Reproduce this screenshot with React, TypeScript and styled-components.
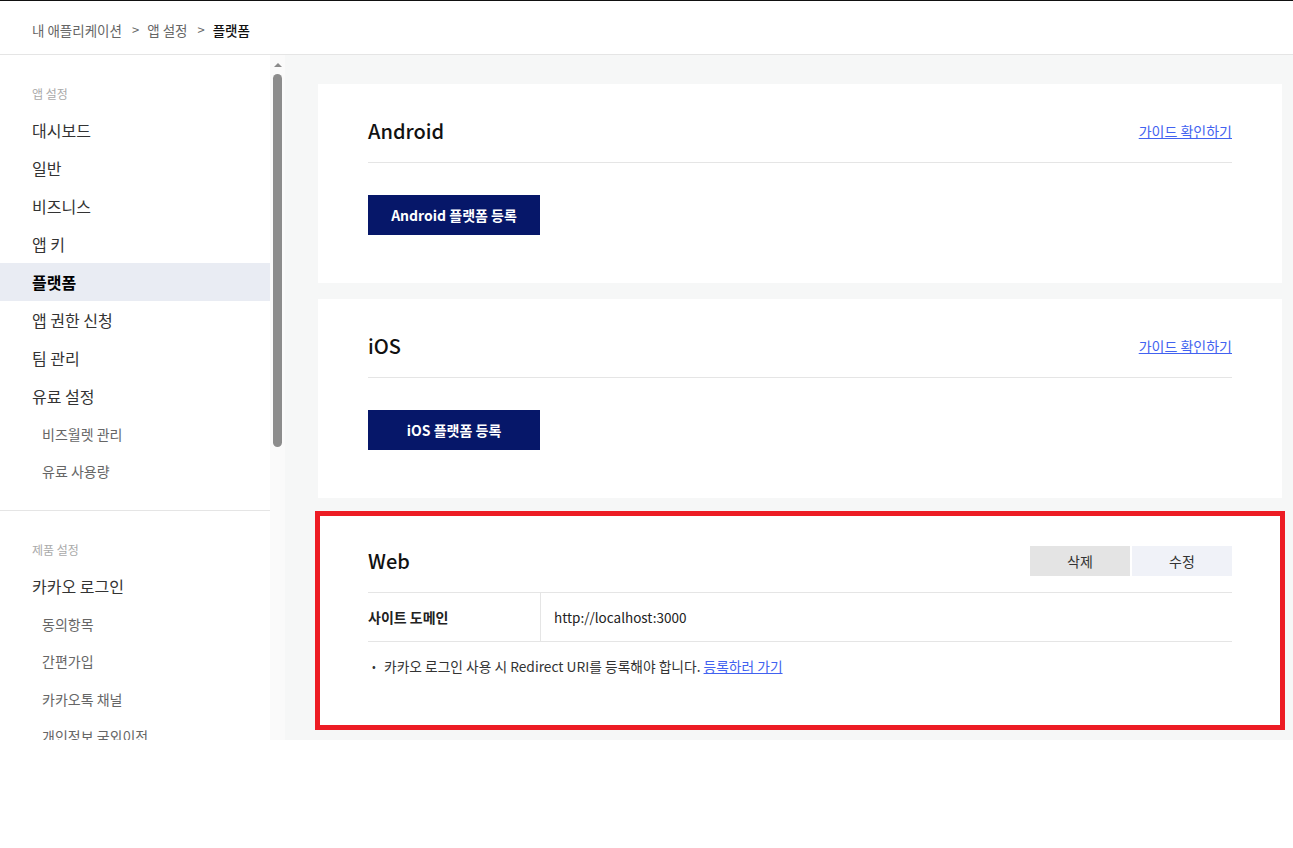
import styled, { createGlobalStyle } from "styled-components";

const GlobalStyle = createGlobalStyle`
  html, body {
    margin: 0;
    padding: 0;
    background: #ffffff;
  }
  body {
    font-family: "Noto Sans CJK KR", "Noto Sans", sans-serif;
    color: #222;
  }
  * {
    box-sizing: border-box;
  }
`;

const Page = styled.div`
  height: 740px;
  display: flex;
  flex-direction: column;
  border-top: 1px solid #111;
`;

const Header = styled.header`
  height: 54px;
  flex-shrink: 0;
  display: flex;
  align-items: flex-start;
  padding: 19px 32px 0;
  border-bottom: 1px solid #e5e5e5;
`;

const Crumb = styled.span<{ $current?: boolean }>`
  font-size: 13.5px;
  line-height: 20px;
  color: ${(p) => (p.$current ? "#111" : "#666")};
  font-weight: ${(p) => (p.$current ? 500 : 400)};
`;

const CrumbSep = styled.span`
  font-size: 13px;
  line-height: 20px;
  color: #666;
  margin: 0 8px 0 10px;
`;

const Body = styled.div`
  flex: 1;
  display: flex;
  min-height: 0;
`;

const SidebarWrap = styled.div`
  width: 285px;
  flex-shrink: 0;
  display: flex;
  background: #fff;
`;

const SidebarList = styled.nav`
  width: 270px;
  overflow: hidden;
`;

// drawn scrollbar: arrow on top, rounded thumb
const ScrollTrack = styled.div`
  width: 15px;
  display: flex;
  flex-direction: column;
  align-items: center;
  background: #fafafa;
  padding-top: 8px;
  gap: 7px;
`;

const ScrollArrow = styled.div`
  width: 0;
  height: 0;
  border-left: 4px solid transparent;
  border-right: 4px solid transparent;
  border-bottom: 4px solid #8a8a8a;
`;

const ScrollThumb = styled.div`
  width: 9px;
  height: 373px;
  border-radius: 5px;
  background: #8c8c8c;
`;

const NavGroup = styled.div<{ $divider?: boolean }>`
  padding: 29px 0 20px;
  border-bottom: ${(p) => (p.$divider ? "1px solid #e5e5e5" : "none")};
`;

const GroupLabel = styled.div`
  padding: 0 32px;
  font-size: 12px;
  line-height: 20px;
  color: #aaa;
  margin-bottom: 7px;
`;

const NavItem = styled.div<{ $active?: boolean }>`
  height: 38px;
  display: flex;
  align-items: center;
  padding: 0 32px;
  font-size: 16px;
  color: ${(p) => (p.$active ? "#000" : "#333")};
  font-weight: ${(p) => (p.$active ? 700 : 400)};
  background: ${(p) => (p.$active ? "#e9ecf3" : "transparent")};
`;

const SubItem = styled.div`
  height: 37.5px;
  display: flex;
  align-items: center;
  padding: 0 42px;
  font-size: 14px;
  color: #666;
`;

const Main = styled.main`
  flex: 1;
  background: #f6f7f7;
  overflow: hidden;
  padding: 29px 11px 0 33px;
  display: flex;
  flex-direction: column;
  gap: 16px;
`;

const Card = styled.section<{ $highlight?: boolean }>`
  background: #fff;
  padding: 17px 50px 48px;
  outline: ${(p) => (p.$highlight ? "5px solid #ed1c24" : "none")};
  outline-offset: -2px;
`;

const CardHeader = styled.div`
  height: 62px;
  padding-bottom: 2px;
  display: flex;
  align-items: center;
  justify-content: space-between;
  border-bottom: 1px solid #e5e5e5;
`;

const CardTitle = styled.h2`
  margin: 0;
  font-size: 20px;
  font-weight: 500;
  color: #111;
`;

const GuideLink = styled.a`
  font-size: 14px;
  color: #4262f0;
  text-decoration: underline;
  cursor: pointer;
`;

const RegisterButton = styled.button`
  margin-top: 32px;
  width: 172px;
  height: 40px;
  border: none;
  background: #061769;
  color: #fff;
  font-family: inherit;
  font-size: 14px;
  font-weight: 700;
  cursor: pointer;
`;

const ActionGroup = styled.div`
  display: flex;
  gap: 2px;
`;

const ActionButton = styled.button<{ $tone: "gray" | "light" }>`
  width: 100px;
  height: 30px;
  border: none;
  background: ${(p) => (p.$tone === "gray" ? "#e4e4e4" : "#f0f2f8")};
  color: #333;
  font-family: inherit;
  font-size: 14px;
  cursor: pointer;
`;

const InfoRow = styled.div`
  display: grid;
  grid-template-columns: 173px 1fr;
  border-bottom: 1px solid #e5e5e5;
  height: 49px;
`;

const InfoLabel = styled.div`
  display: flex;
  align-items: center;
  font-size: 14px;
  font-weight: 700;
  color: #222;
  border-right: 1px solid #e5e5e5;
`;

const InfoValue = styled.div`
  display: flex;
  align-items: center;
  padding-left: 13px;
  font-size: 13.5px;
  color: #222;
`;

const NoteList = styled.ul`
  list-style: none;
  margin: 0;
  padding: 14px 0 3px;
`;

const Note = styled.li`
  position: relative;
  padding-left: 16px;
  font-size: 13.75px;
  line-height: 20px;
  color: #333;

  &::before {
    content: "•";
    position: absolute;
    left: 4px;
    font-size: 11px;
  }
`;

const NoteLink = styled.a`
  color: #4262f0;
  text-decoration: underline;
  cursor: pointer;
`;

const appMenu = ["대시보드", "일반", "비즈니스", "앱 키", "플랫폼", "앱 권한 신청", "팀 관리", "유료 설정"];
const payMenu = ["비즈월렛 관리", "유료 사용량"];
const loginMenu = ["동의항목", "간편가입", "카카오톡 채널", "개인정보 국외이전"];

const PlatformCard = ({ name }: { name: string }) => (
  <Card>
    <CardHeader>
      <CardTitle>{name}</CardTitle>
      <GuideLink>가이드 확인하기</GuideLink>
    </CardHeader>
    <RegisterButton>{name} 플랫폼 등록</RegisterButton>
  </Card>
);

const App = () => {
  return (
    <Page>
      <GlobalStyle />
      <Header>
        <Crumb>내 애플리케이션</Crumb>
        <CrumbSep>&gt;</CrumbSep>
        <Crumb>앱 설정</Crumb>
        <CrumbSep>&gt;</CrumbSep>
        <Crumb $current>플랫폼</Crumb>
      </Header>
      <Body>
        <SidebarWrap>
          <SidebarList>
            <NavGroup $divider>
              <GroupLabel>앱 설정</GroupLabel>
              {appMenu.map((m) => (
                <NavItem key={m} $active={m === "플랫폼"}>
                  {m}
                </NavItem>
              ))}
              {payMenu.map((m) => (
                <SubItem key={m}>{m}</SubItem>
              ))}
            </NavGroup>
            <NavGroup>
              <GroupLabel>제품 설정</GroupLabel>
              <NavItem>카카오 로그인</NavItem>
              {loginMenu.map((m) => (
                <SubItem key={m}>{m}</SubItem>
              ))}
            </NavGroup>
          </SidebarList>
          <ScrollTrack>
            <ScrollArrow />
            <ScrollThumb />
          </ScrollTrack>
        </SidebarWrap>
        <Main>
          <PlatformCard name="Android" />
          <PlatformCard name="iOS" />
          <Card $highlight>
            <CardHeader>
              <CardTitle>Web</CardTitle>
              <ActionGroup>
                <ActionButton $tone="gray">삭제</ActionButton>
                <ActionButton $tone="light">수정</ActionButton>
              </ActionGroup>
            </CardHeader>
            <InfoRow>
              <InfoLabel>사이트 도메인</InfoLabel>
              <InfoValue>http://localhost:3000</InfoValue>
            </InfoRow>
            <NoteList>
              <Note>
                카카오 로그인 사용 시 Redirect URI를 등록해야 합니다. <NoteLink>등록하러 가기</NoteLink>
              </Note>
            </NoteList>
          </Card>
        </Main>
      </Body>
    </Page>
  );
};

export default App;
